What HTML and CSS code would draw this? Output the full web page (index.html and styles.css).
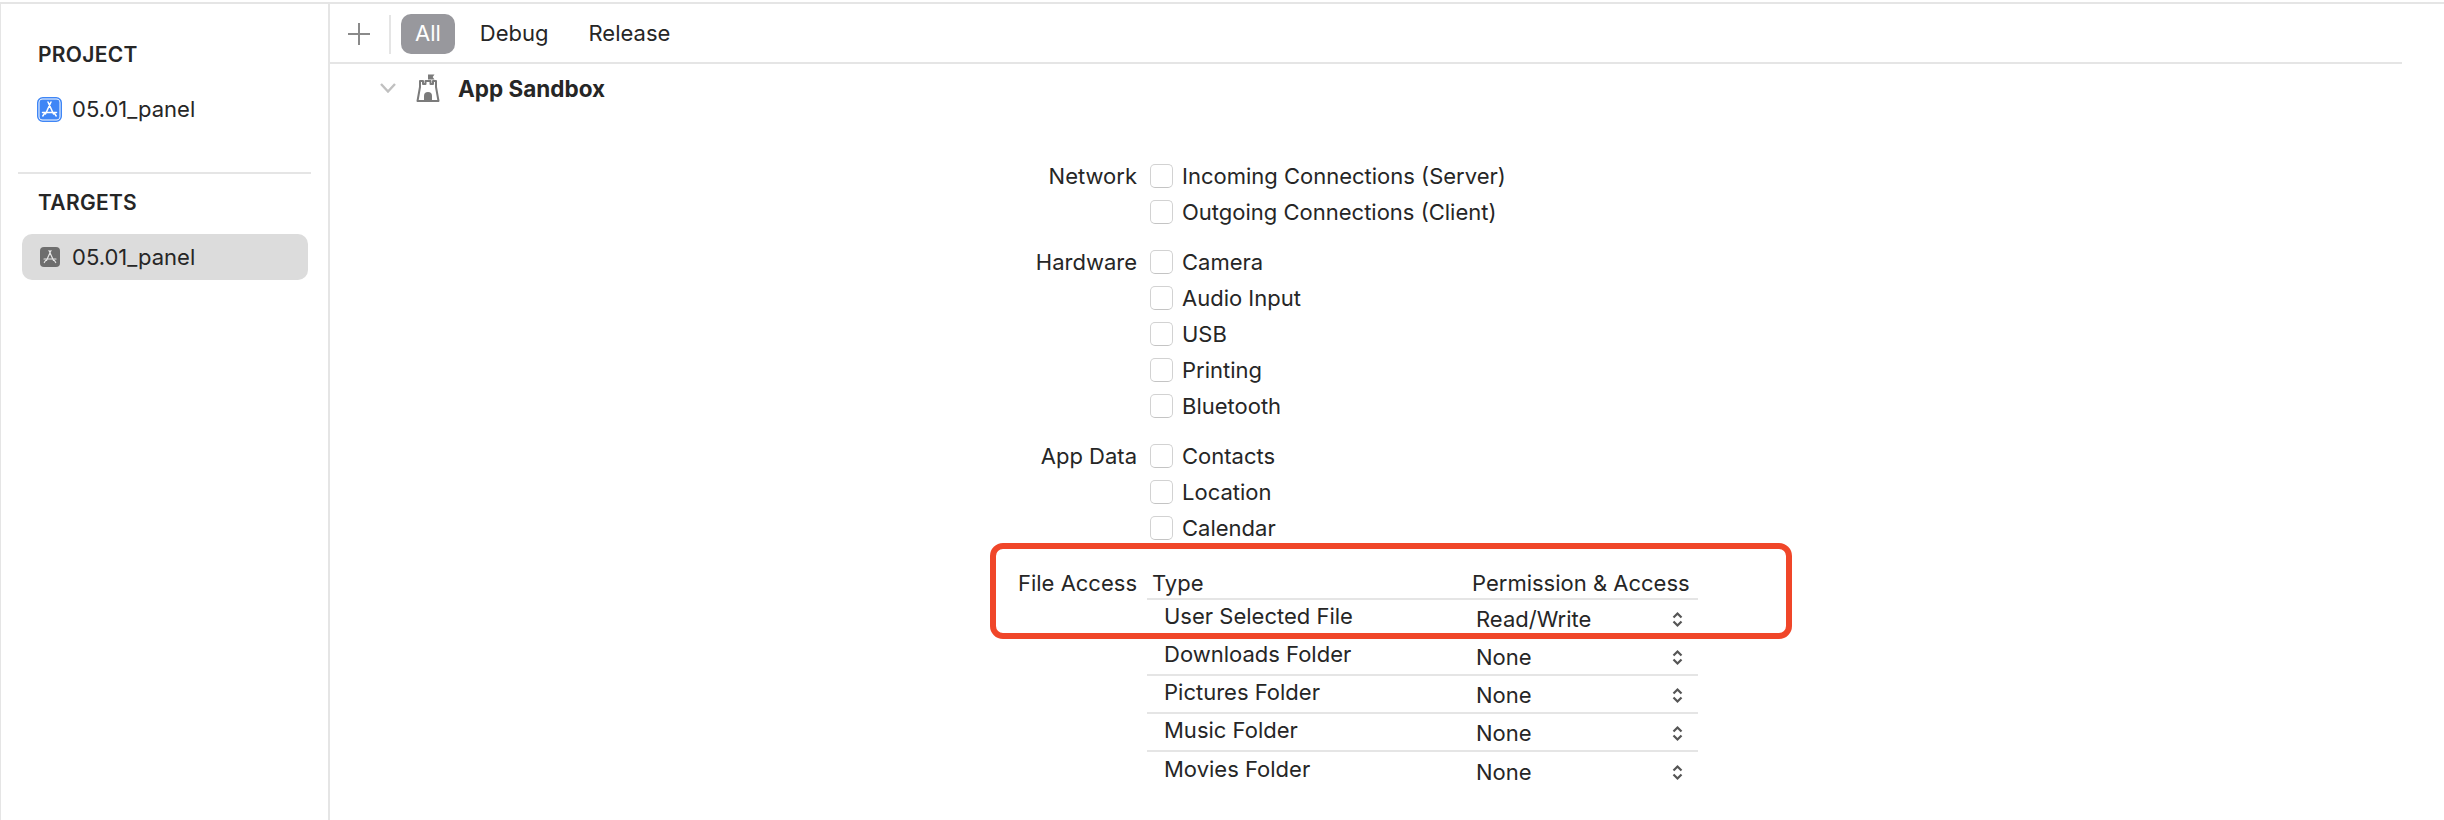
FILE: index.html
```html
<!DOCTYPE html>
<html lang="en">
<head>
<meta charset="utf-8">
<title>Signing &amp; Capabilities</title>
<link rel="stylesheet" href="styles.css">
</head>
<body>
<div class="app">
  <aside class="sidebar">
    <section class="side-section side-project">
      <h2 class="side-title">PROJECT</h2>
      <div class="side-item">
        <svg class="icon-project" viewBox="0 0 25 25"><rect x="0.75" y="0.75" width="23.5" height="23.5" rx="5" fill="#fff" stroke="#3f86f6" stroke-width="1.5"/><rect x="2.5" y="2.5" width="20" height="20" rx="3" fill="#3f86f6"/><path d="M11 5l5.500 12M14 5l-5.500 12M5.500 15.500h14M5.800 19l1.600-2.400M19.200 19l-1.600-2.400" fill="none" stroke="#fff" stroke-width="1.500" stroke-linecap="round"/></svg>
        <span>05.01_panel</span>
      </div>
    </section>
    <hr class="side-rule">
    <section class="side-section">
      <h2 class="side-title">TARGETS</h2>
      <div class="side-item selected">
        <svg class="icon-target" viewBox="0 0 20 20"><rect width="20" height="20" rx="4" fill="#6e6e6e"/><path d="M9 3.500l4.500 10M11 3.500l-4.500 10M4 12h12M4.300 15.500l1.300-2M15.700 15.500l-1.300-2" fill="none" stroke="#e6e6e6" stroke-width="1.200" stroke-linecap="round"/></svg>
        <span>05.01_panel</span>
      </div>
    </section>
  </aside>
  <main class="main">
    <div class="toolbar">
      <svg class="icon-plus" viewBox="0 0 22 22"><path d="M11 0v22M0 11h22" stroke="#8a8a8a" stroke-width="2"/></svg>
      <span class="tool-sep"></span>
      <span class="pill active">All</span>
      <span class="pill">Debug</span>
      <span class="pill">Release</span>
    </div>
    <div class="cap-head">
      <svg class="icon-chevron" viewBox="0 0 16 10"><path d="M1 1l7 7.500L15 1" fill="none" stroke="#c0c0c0" stroke-width="2.400"/></svg>
      <svg class="icon-castle" viewBox="0 0 24 28"><path d="M1.500 27L4 13V7h3v3h2.500V7h5v3H17V7h3v6l2.500 14z" fill="#fff" stroke="#7b7b7b" stroke-width="2" stroke-linejoin="round"/><path d="M8 27.500V22a4 4 0 018 0v5.500z" fill="#7b7b7b"/><path d="M12 8V.5h6.500l-1.800 2.500 1.800 2.500H12z" fill="#7b7b7b"/></svg>
      <h1 class="cap-title">App Sandbox</h1>
    </div>
    <div class="form">
      <div class="group">
        <div class="group-label">Network</div>
        <div class="checks">
          <label class="check"><span class="box"></span>Incoming Connections (Server)</label>
          <label class="check"><span class="box"></span>Outgoing Connections (Client)</label>
        </div>
      </div>
      <div class="group">
        <div class="group-label">Hardware</div>
        <div class="checks">
          <label class="check"><span class="box"></span>Camera</label>
          <label class="check"><span class="box"></span>Audio Input</label>
          <label class="check"><span class="box"></span>USB</label>
          <label class="check"><span class="box"></span>Printing</label>
          <label class="check"><span class="box"></span>Bluetooth</label>
        </div>
      </div>
      <div class="group">
        <div class="group-label">App Data</div>
        <div class="checks">
          <label class="check"><span class="box"></span>Contacts</label>
          <label class="check"><span class="box"></span>Location</label>
          <label class="check"><span class="box"></span>Calendar</label>
        </div>
      </div>
      <div class="group group-file">
        <div class="group-label">File Access</div>
        <div class="table">
          <div class="thead"><span>Type</span><span>Permission &amp; Access</span></div>
          <div class="row"><span class="name">User Selected File</span><span class="value">Read/Write<svg class="stepper" viewBox="0 0 11 17"><path d="M1.500 6.500l4-4 4 4M1.500 10.500l4 4 4-4" fill="none" stroke="#555" stroke-width="2.200"/></svg></span></div>
          <div class="row"><span class="name">Downloads Folder</span><span class="value">None<svg class="stepper" viewBox="0 0 11 17"><path d="M1.500 6.500l4-4 4 4M1.500 10.500l4 4 4-4" fill="none" stroke="#555" stroke-width="2.200"/></svg></span></div>
          <div class="row"><span class="name">Pictures Folder</span><span class="value">None<svg class="stepper" viewBox="0 0 11 17"><path d="M1.500 6.500l4-4 4 4M1.500 10.500l4 4 4-4" fill="none" stroke="#555" stroke-width="2.200"/></svg></span></div>
          <div class="row"><span class="name">Music Folder</span><span class="value">None<svg class="stepper" viewBox="0 0 11 17"><path d="M1.500 6.500l4-4 4 4M1.500 10.500l4 4 4-4" fill="none" stroke="#555" stroke-width="2.200"/></svg></span></div>
          <div class="row"><span class="name">Movies Folder</span><span class="value">None<svg class="stepper" viewBox="0 0 11 17"><path d="M1.500 6.500l4-4 4 4M1.500 10.500l4 4 4-4" fill="none" stroke="#555" stroke-width="2.200"/></svg></span></div>
        </div>
        <div class="highlight"></div>
      </div>
    </div>
  </main>
</div>
</body>
</html>
```
FILE: styles.css
```css
* { box-sizing: border-box; }
html, body { margin: 0; padding: 0; background: #fff; }
body {
  width: 2444px;
  height: 820px;
  overflow: hidden;
  padding-top: 2px;
  font-family: Inter, "Liberation Sans", sans-serif;
  font-size: 22px;
  color: #262626;
}
.app {
  display: flex;
  height: 818px;
  border-top: 2px solid #e5e5e5;
  border-left: 1px solid #e5e5e5;
}
.sidebar {
  width: 329px;
  flex: none;
  border-right: 2px solid #e5e5e5;
}
.side-project { padding-top: 37px; height: 168px; }
.side-title {
  margin: 0 0 0 37px;
  font-size: 21px;
  line-height: 28px;
  font-weight: 600;
  letter-spacing: 0.3px;
}
.side-item {
  display: flex;
  align-items: center;
  height: 46px;
  line-height: 46px;
}
.side-project .side-item { margin: 17px 0 0 36px; }
.icon-project { width: 25px; height: 25px; margin-right: 10px; }
.side-rule {
  height: 2px;
  margin: 0 17px 0 17px;
  border: 0;
  background: #e5e5e5;
}
.side-rule + .side-section { padding-top: 15px; }
.selected {
  margin: 17px 20px 0 21px;
  padding-left: 18px;
  border-radius: 10px;
  background: #dcdcdc;
}
.icon-target { width: 20px; height: 20px; margin-right: 12px; }
.main { flex: 1; min-width: 0; }
.toolbar {
  display: flex;
  align-items: center;
  height: 60px;
  margin-right: 42px;
  padding: 2px 0 0 18px;
  border-bottom: 2px solid #e5e5e5;
}
.icon-plus { width: 22px; height: 22px; }
.tool-sep { width: 2px; height: 39px; margin: 0 10px 0 19px; background: #e5e5e5; }
.pill {
  height: 40px;
  padding: 0 13px;
  line-height: 38px;
  margin-right: 14px;
  border-radius: 10px;
}
.pill.active { background: #98989d; color: #fff; padding: 0 14px; margin-right: 12px; }
.cap-head {
  display: flex;
  align-items: center;
  height: 48px;
  padding: 0 0 0 50px;
}
.icon-chevron { width: 16px; height: 10px; margin-right: 20px; }
.icon-castle { width: 24px; height: 28px; margin-right: 18px; }
.cap-title { margin: 0; font-size: 22.500px; font-weight: 700; }
.form { padding-top: 46px; }
.group { display: flex; gap: 13px; margin-bottom: 14px; position: relative; }
.group-label { width: 807px; flex: none; text-align: right; line-height: 36px; }
.check { display: flex; align-items: center; height: 36px; }
.box {
  width: 23px;
  height: 24px;
  margin-right: 9px;
  border: 1px solid #d2d2d2;
  border-bottom-color: #c4c4c4;
  border-radius: 5px;
  background: #fff;
}
.group-file { margin: 21px 0 0; gap: 10px; }
.group-file .group-label { line-height: 32px; }
.table { width: 551px; }
.thead {
  display: grid;
  grid-template-columns: 320px 1fr;
  height: 33px;
  padding-left: 5px;
  line-height: 32px;
  border-bottom: 2px solid #e5e5e5;
}
.row {
  display: grid;
  grid-template-columns: 312px 1fr;
  align-items: center;
  height: 38px;
  padding-left: 17px;
  border-bottom: 2px solid #e5e5e5;
}
.row:last-child { border-bottom: 0; }
.name { padding-bottom: 5px; }
.value { display: flex; justify-content: space-between; align-items: center; padding: 2px 15px 0 0; }
.stepper { width: 11px; height: 17px; }
.highlight {
  position: absolute;
  top: -24px;
  left: 660px;
  width: 802px;
  height: 96px;
  border: 6px solid #f04629;
  border-radius: 13px;
}
```
